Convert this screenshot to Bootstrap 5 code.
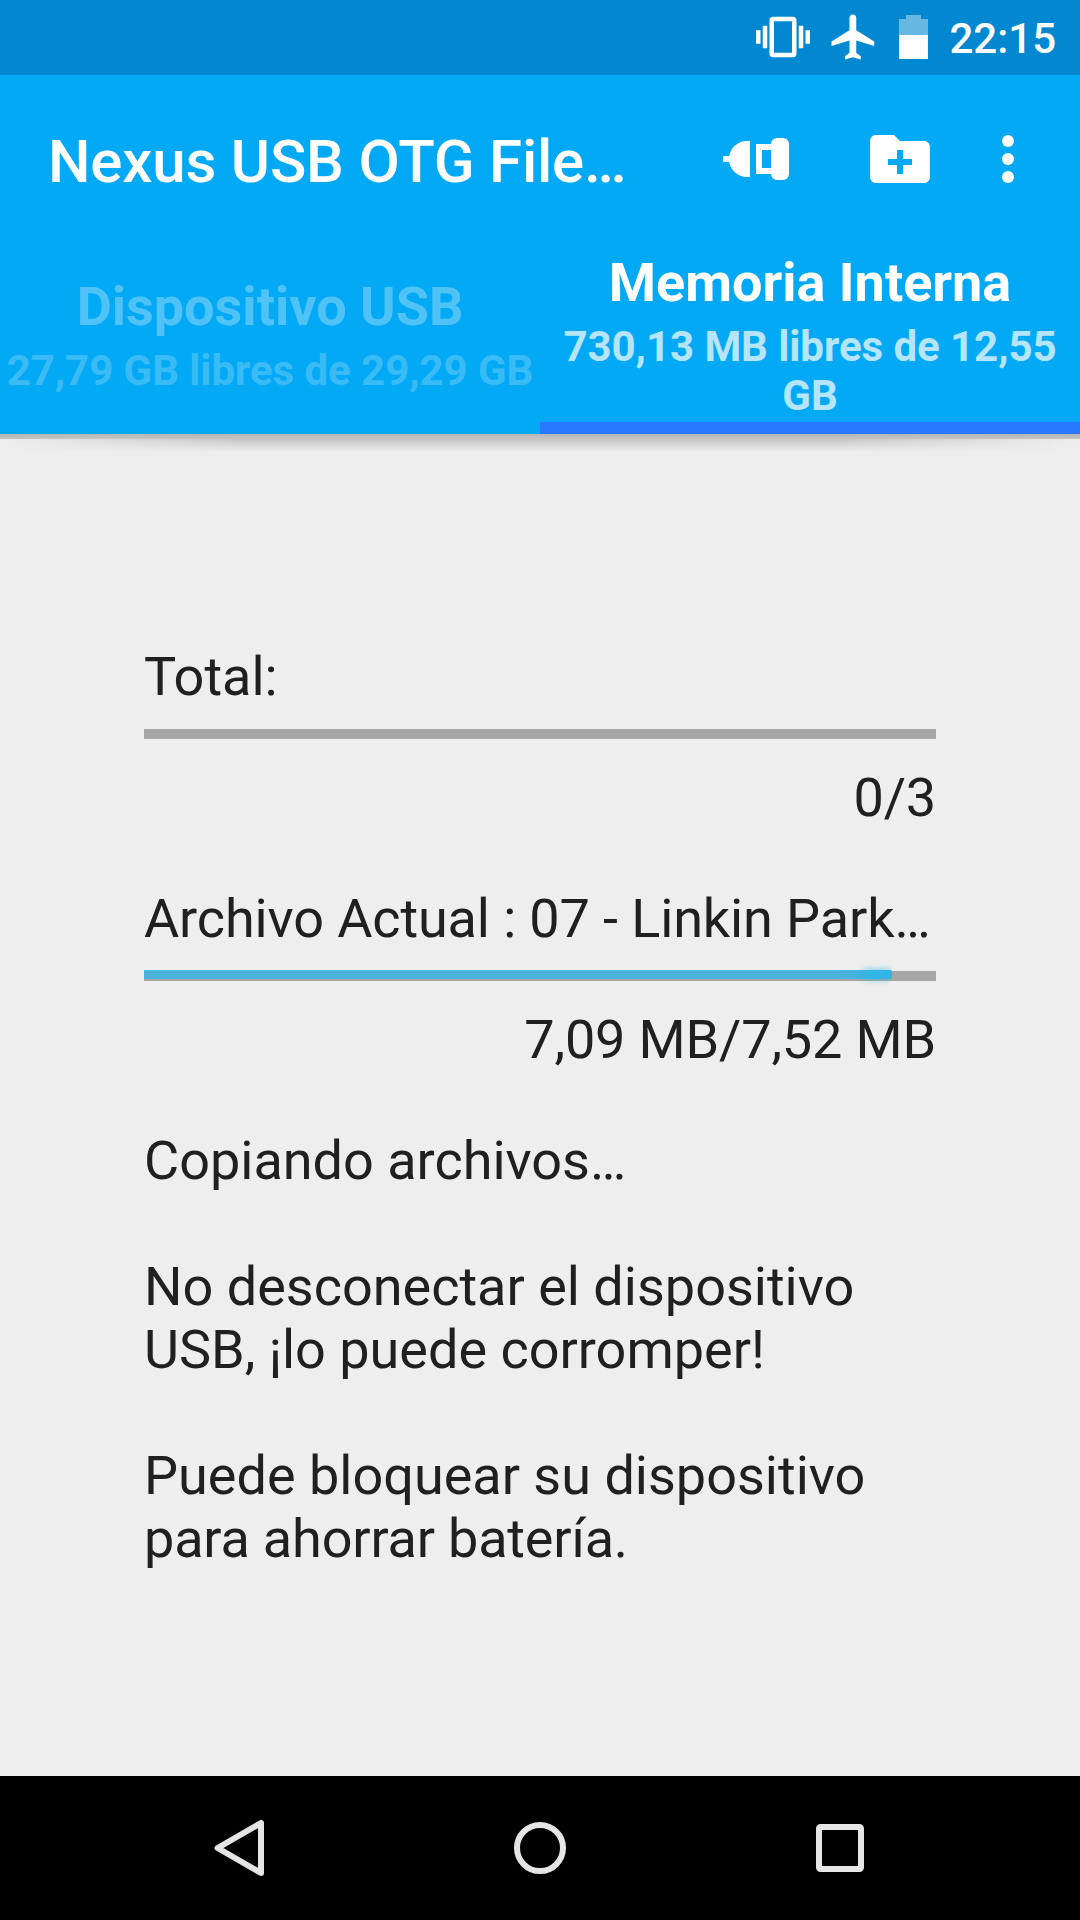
<!DOCTYPE html>
<html lang="es">
<head>
<meta charset="utf-8">
<meta name="viewport" content="width=device-width, initial-scale=1">
<title>Nexus USB OTG File Manager</title>
<link href="https://cdn.jsdelivr.net/npm/bootstrap@5.3.0/dist/css/bootstrap.min.css" rel="stylesheet">
<style>
body{font-family:Roboto,"Noto Sans",sans-serif;background:#eee;color:#202020;width:1080px;height:1920px;overflow:hidden}
svg{display:block;flex:none}
.status-bar{height:75px;background:#0288d1;padding:0 24px 1px 0;color:#fff}
.icon-vibrate{margin-right:17px}
.icon-plane{margin-right:18px}
.icon-battery{margin-right:21px}
.clock{font-size:42px;line-height:49px;font-weight:500;padding-top:3px}
.app-header{background:#03a9f4;color:#fff;height:359px}
.toolbar{height:168px;padding-left:48px;padding-right:36px}
.icon-usb{margin-right:75px}
.icon-folder{margin-right:36px}
.app-title{font-size:60px;line-height:70px;font-weight:500;width:600px;letter-spacing:-.2px;padding-top:5px}
.tab-item{height:191px;width:540px;border-bottom:12px solid transparent}
.tab-item.selected{border-bottom-color:#2979ff;padding-top:8px}
.tab-item.idle{padding-top:32px}
.tab-name{font-size:54px;line-height:63px;font-weight:700;margin-bottom:8px}
.tab-info{font-size:42px;line-height:49px;font-weight:700;opacity:.7;letter-spacing:-.05px}
.tab-item.idle .tab-name{opacity:.3}
.tab-item.idle .tab-info{opacity:.21}
.header-shadow{height:18px;background:linear-gradient(90deg,#eee,#eee0 22%,#eee0 78%,#eee) 0 5px/100% 13px no-repeat,linear-gradient(#b6b6b6,#c4c4c4 5px,#cdcdcd 7px,#dcdcdc 12px,#eee 18px)}
.content-area{height:1324px;padding:193px 144px 0;font-size:54px;line-height:63px}
.track{height:10px;border-radius:0;background:#a6a6a6;overflow:visible;margin:21px 0 27px}
.track .progress-bar{height:9px;margin-top:-1px;background:#4ab1da;border-top:1px solid #49bbe8;overflow:visible;border-radius:0 2px 2px 0}
.glow{width:50px;height:9px;margin:-1px 0 0 auto;background:linear-gradient(90deg,#33b5e500,#33b5e5);border-radius:0 3px 3px 0;clip-path:inset(-8px 0 -8px -10px)}
.glow::after{content:"";display:block;width:24px;height:5px;margin:2px 3px 0 auto;background:#33b5e5;box-shadow:0 0 7px 1px #33b5e5}
.count{margin-bottom:58px;letter-spacing:-.15px}
.file-line{letter-spacing:-.12px}
.message p{margin-bottom:63px}
.tight{letter-spacing:-.17px}
.nav-bar{height:144px;background:#000;padding:0 168px}
</style>
<script src="https://cdn.jsdelivr.net/npm/bootstrap@5.3.0/dist/js/bootstrap.bundle.min.js"></script>
</head>
<body class="m-0">
<div class="status-bar d-flex align-items-center justify-content-end">
  <svg class="icon-vibrate" width="54" height="54" viewBox="0 0 24 24" fill="#fff"><path d="M0 15h2V9H0v6zm3 2h2V7H3v10zm19-8v6h2V9h-2zm-3 8h2V7h-2v10zM16.500 3h-9C6.670 3 6 3.670 6 4.500v15c0 .83.67 1.500 1.500 1.500h9c.83 0 1.500-.67 1.500-1.500v-15c0-.83-.67-1.500-1.500-1.500zM16 19H8V5h8v14z"/></svg>
  <svg class="icon-plane" width="54" height="54" viewBox="0 0 24 24" fill="#fff"><path d="M21 16v-2l-8-5V3.500c0-.83-.67-1.500-1.500-1.500S10 2.670 10 3.500V9l-8 5v2l8-2.500V19l-2 1.500V22l3.500-1 3.500 1v-1.500L13 19v-5.500l8 2.500z"/></svg>
  <svg class="icon-battery" width="29" height="44" viewBox="0 0 29 44" fill="#fff"><path fill-opacity=".4" d="M0 4h7V0h15v4h7v16H0z"/><path d="M0 20h29v24H0z"/></svg>
  <span class="clock">22:15</span>
</div>
<header class="app-header">
  <div class="toolbar d-flex align-items-center">
    <div class="app-title text-truncate me-auto">Nexus USB OTG File…</div>
    <svg class="icon-usb" width="66" height="42" viewBox="0 0 66 42" fill="#fff"><path d="M0 18h6.200A18 18 0 0 1 24 3h3v36h-3A18 18 0 0 1 6.200 24H0z"/><path fill-rule="evenodd" d="M33 6h15v30H33zM39 12v18h9V12z"/><rect x="48" width="18" height="42" rx="6"/></svg>
    <svg class="icon-folder" width="72" height="72" viewBox="0 0 24 24" fill="#fff"><path fill-rule="evenodd" d="M20 6h-8l-2-2H4c-1.110 0-2 .89-2 2v12c0 1.110.89 2 2 2h16c1.110 0 2-.89 2-2V8c0-1.110-.89-2-2-2zM11 9h2v3h3v2h-3v3h-2v-3H8v-2h3z"/></svg>
    <svg width="72" height="72" viewBox="0 0 24 24" fill="#fff"><circle cx="12" cy="6" r="2"/><circle cx="12" cy="12" r="2"/><circle cx="12" cy="18" r="2"/></svg>
  </div>
  <div class="d-flex text-center">
    <div class="tab-item idle">
      <div class="tab-name">Dispositivo USB</div>
      <div class="tab-info">27,79 GB libres de 29,29 GB</div>
    </div>
    <div class="tab-item selected">
      <div class="tab-name">Memoria Interna</div>
      <div class="tab-info">730,13 MB libres de 12,55 GB</div>
    </div>
  </div>
</header>
<div class="header-shadow"></div>
<main class="content-area">
  <div>Total:</div>
  <div class="progress track"><div class="progress-bar" style="width:0"></div></div>
  <div class="count text-end">0/3</div>
  <div class="file-line text-nowrap">Archivo Actual : 07 - Linkin Park…</div>
  <div class="progress track"><div class="progress-bar" style="width:94.4%"><div class="glow"></div></div></div>
  <div class="count text-end">7,09 MB/7,52 MB</div>
  <div class="message">
    <p>Copiando archivos…</p>
    <p>No desconectar el dispositivo USB, ¡lo puede corromper!</p>
    <p>Puede bloquear su dispositivo <span class="tight">para ahorrar batería.</span></p>
  </div>
</main>
<nav class="nav-bar d-flex align-items-center justify-content-between">
  <svg width="144" height="144" viewBox="168 1776 144 144" fill="none" stroke="#e5e5e5" stroke-width="6" stroke-linejoin="round"><path d="M217.600 1848L261 1823v50z"/></svg>
  <svg width="144" height="144" viewBox="468 1776 144 144" fill="none" stroke="#e5e5e5" stroke-width="6"><circle cx="540" cy="1848" r="23"/></svg>
  <svg width="144" height="144" viewBox="768 1776 144 144" fill="none" stroke="#e5e5e5" stroke-width="6"><rect x="819" y="1827" width="42" height="42" rx="1.500"/></svg>
</nav>
</body>
</html>
